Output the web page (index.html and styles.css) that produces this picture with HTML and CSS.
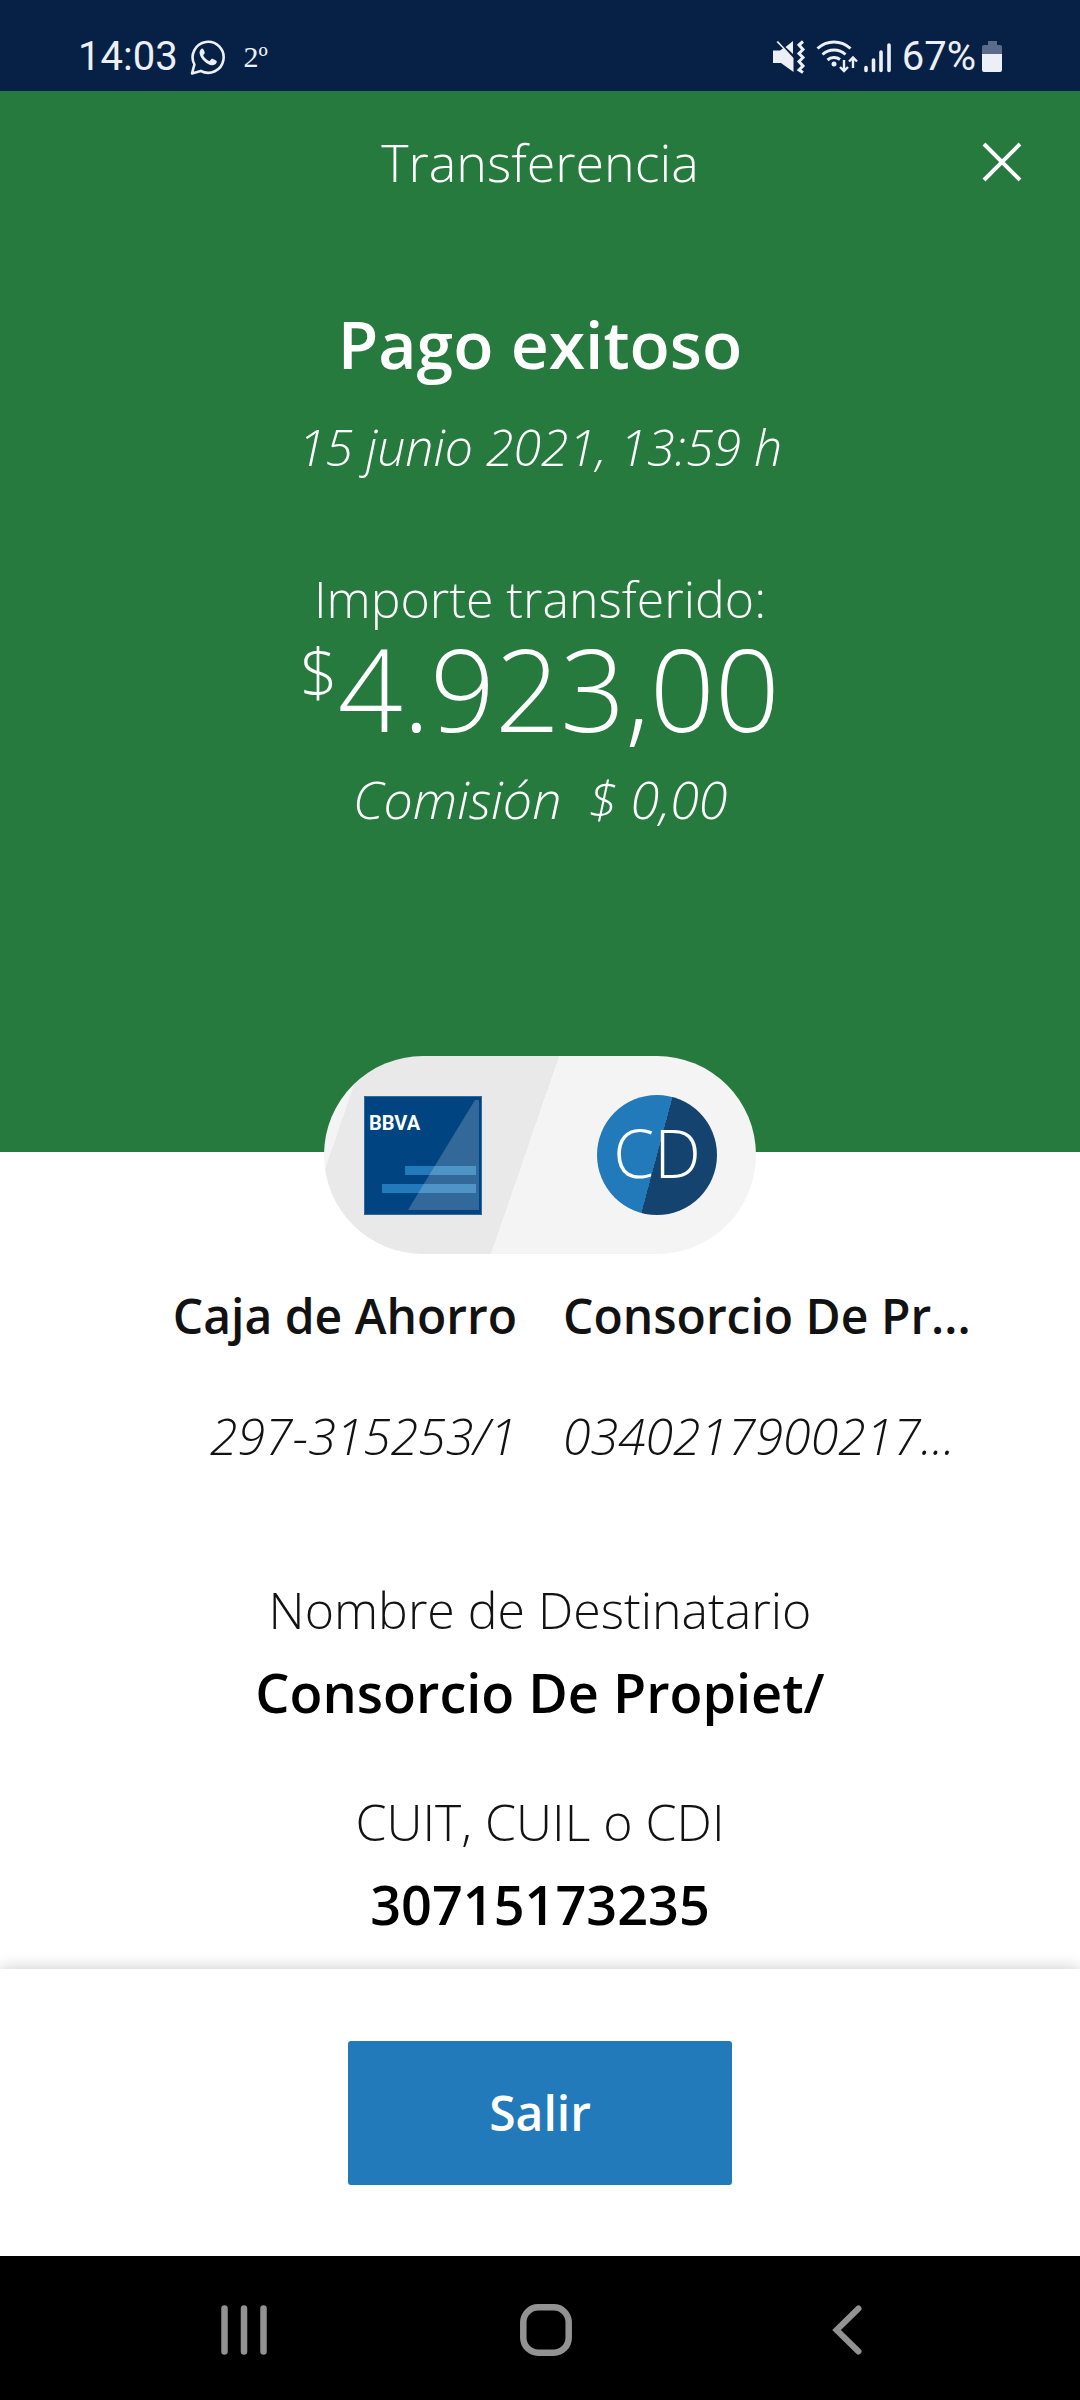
FILE: index.html
```html
<!DOCTYPE html>
<html lang="es">
<head>
<meta charset="utf-8">
<meta name="viewport" content="width=device-width, initial-scale=1">
<title>Transferencia</title>
<link rel="stylesheet" href="styles.css">
</head>
<body>
<div class="screen">
  <div class="status">
    <div class="status-group status-left">
      <span>14:03</span>
      <svg width="36" height="36" viewBox="0 0 36 36" aria-label="WhatsApp">
        <path d="M2 34.500 4.400 25.500A15.500 15.500 0 1 1 10.700 31.900Z" fill="none" stroke="currentColor" stroke-width="2.600" stroke-linejoin="round"/>
        <path d="M12.300 9.500c-.8 0-3 1.800-2.700 4.700.5 4.900 7.200 11.800 12.700 12 2.800.1 4.600-1.900 4.500-3.900 0-.6-4.300-2.800-5-2.600-.8.2-1.800 2.400-2.600 2.300-1.600-.3-5.400-3.700-5.900-5.500-.2-.7 1.500-1.700 1.500-2.700 0-.8-1.500-4.300-2.500-4.300z" fill="currentColor"/>
      </svg>
      <span class="temperature">2º</span>
    </div>
    <div class="status-group status-right">
      <svg width="38" height="34" viewBox="0 0 38 34" aria-label="Vibración">
        <path d="M1 10.500h7l3-2L4.500 2 6 1l15.500 17V32L9 23H1zM13.500 7 21 1v13z" fill="currentColor"/>
        <path d="M31 1.500 27 5l4 4.500-4 4 4 4-4 4 4 4.500-4 4 4 2.500" fill="none" stroke="currentColor" stroke-width="3"/>
      </svg>
      <svg width="42" height="34" viewBox="0 0 42 34" aria-label="Wi-Fi">
        <g fill="none" stroke="currentColor" stroke-width="3">
          <path d="M1.500 8.500A24 24 0 0 1 34.500 8.500M6.500 14.500A17 17 0 0 1 29.500 14.500M11.500 20A10 10 0 0 1 24 19.500"/>
          <path d="M28 20v10M24 27l4 4 4-4M37 28V18M33 21.500l4-4 4 4" stroke-width="2.400"/>
        </g>
        <circle cx="18" cy="24" r="2.500" fill="currentColor"/>
      </svg>
      <svg width="32" height="34" viewBox="0 0 32 34" aria-label="Señal">
        <path d="M2 27.500v3M9.500 20v10.500M17 12v18.500M25 5v25.500" fill="none" stroke="currentColor" stroke-width="3.600" stroke-linecap="round"/>
      </svg>
      <span>67%</span>
      <svg width="20" height="34" viewBox="0 0 20 34" aria-label="Batería">
        <path d="M6 1h9v4h3a2 2 0 0 1 2 2v8H0V7a2 2 0 0 1 2-2h4z" fill="#5b6b8b"/>
        <path d="M0 14h20v16a2 2 0 0 1-2 2H2a2 2 0 0 1-2-2z" fill="currentColor"/>
      </svg>
    </div>
  </div>

  <main class="content">
    <section class="hero">
      <header class="app-bar">
        <span class="app-title">Transferencia</span>
        <button class="close" type="button" aria-label="Cerrar">
          <svg width="40" height="40" viewBox="0 0 40 40"><path d="M2 2 38 38M38 2 2 38" fill="none" stroke="currentColor" stroke-width="4"/></svg>
        </button>
      </header>
      <h1 class="result">Pago exitoso</h1>
      <p class="date">15 junio 2021, 13:59 h</p>
      <p class="amount-label">Importe transferido:</p>
      <p class="amount"><span class="currency">$</span>4.923,00</p>
      <p class="fee">Comisión&nbsp; $ 0,00</p>
    </section>

    <section class="parties">
      <div class="pill">
        <svg width="118" height="119" viewBox="0 0 118 119" aria-label="BBVA">
          <path d="M0 0h118v119H0z" fill="#004481"/>
          <path d="M41 70h71v9H41zM18 88h94v9H18z" fill="#237aba"/>
          <path d="M111 4h4v110H44z" fill="#fff" fill-opacity=".2"/>
          <path d="M.5.500h117v118H.5z" fill="none" stroke="#2f6b9c"/>
          <text class="brand" x="5" y="34">BBVA</text>
        </svg>
        <span class="avatar">CD</span>
      </div>
      <div class="accounts">
        <div class="account account-from">
          <p class="account-name">Caja de Ahorro</p>
          <p class="account-number">297-315253/1</p>
        </div>
        <div class="account">
          <p class="account-name">Consorcio De Pr...</p>
          <p class="account-number">0340217900217...</p>
        </div>
      </div>
    </section>

    <dl class="details">
      <div class="detail">
        <dt>Nombre de Destinatario</dt>
        <dd>Consorcio De Propiet/</dd>
      </div>
      <div class="detail">
        <dt>CUIT, CUIL o CDI</dt>
        <dd>30715173235</dd>
      </div>
    </dl>
  </main>

  <footer class="actions">
    <button class="exit" type="button">Salir</button>
  </footer>

  <nav class="system-nav" aria-label="Sistema">
    <button type="button" aria-label="Recientes">
      <svg width="52" height="52" viewBox="0 0 52 52"><path d="M6.500 4.500v43M26 4.500v43M45.500 4.500v43" fill="none" stroke="currentColor" stroke-width="6.500" stroke-linecap="round"/></svg>
    </button>
    <button type="button" aria-label="Inicio">
      <svg width="52" height="52" viewBox="0 0 52 52"><rect x="3.300" y="3.300" width="45.400" height="45.400" rx="15" fill="none" stroke="currentColor" stroke-width="6.500"/></svg>
    </button>
    <button type="button" aria-label="Atrás">
      <svg width="52" height="52" viewBox="0 0 52 52"><path d="M37.500 4.500 15.500 26l22 21.500" fill="none" stroke="currentColor" stroke-width="6" stroke-linecap="round"/></svg>
    </button>
  </nav>
</div>
</body>
</html>
```
FILE: styles.css
```css
* {
  box-sizing: border-box;
}

body,
h1,
p,
dl,
dd {
  margin: 0;
}

body {
  background: #fff;
  color: #121212;
  font-family: "Open Sans", "Noto Sans", sans-serif;
  font-size: 50px;
  font-weight: 300;
  line-height: 72px;
}

button {
  border: 0;
  padding: 0;
  background: none;
  color: inherit;
  font: inherit;
}

svg {
  display: block;
  flex: none;
}

.screen {
  display: flex;
  flex-direction: column;
  min-height: 100vh;
}

/* Status bar */
.status {
  display: flex;
  justify-content: space-between;
  height: 91px;
  padding: 22px 78px 0;
  background: #072146;
  color: #eceff5;
  font-family: Roboto, sans-serif;
  font-size: 40px;
  font-weight: 400;
}

.status-group {
  display: flex;
  align-items: center;
}

.status-left {
  gap: 12px;
}

.status-right {
  gap: 6px;
}

.temperature {
  padding-left: 6px;
  font-family: "Liberation Serif", serif;
  font-size: 30px;
}

.content {
  flex: 1;
}

/* Result summary */
.hero {
  display: flex;
  flex-direction: column;
  align-items: center;
  min-height: 1061px;
  background: #277a3e;
  color: #fff;
  text-align: center;
}

.app-bar {
  display: grid;
  grid-template-columns: 1fr auto 1fr;
  align-items: center;
  width: 100%;
  height: 142px;
  padding: 0 58px;
  font-size: 52px;
}

.app-title {
  grid-column: 2;
}

.close {
  justify-self: end;
}

.result {
  padding-top: 64px;
  font-size: 66px;
  font-weight: 600;
  line-height: 92px;
}

.date {
  padding-top: 22px;
  font-style: italic;
}

.amount-label {
  padding-top: 80px;
}

.amount {
  display: flex;
  align-items: flex-start;
  font-size: 114px;
  line-height: 106px;
}

.currency {
  font-size: 66px;
  line-height: 72px;
}

.fee {
  padding-top: 22px;
  font-size: 52px;
  font-style: italic;
}

/* Origin and destination */
.pill {
  display: flex;
  align-items: center;
  justify-content: space-between;
  width: 40%;
  min-width: 432px;
  height: 198px;
  margin: -96px auto 0;
  padding: 0 39px 0 40px;
  border-radius: 99px;
  background: linear-gradient(109deg, #f4f4f4 8%, #e9e9e9 8% 47%, #f4f4f4 47%);
  position: relative;
}

.brand {
  fill: #fff;
  font-family: Roboto, "Liberation Sans", sans-serif;
  font-size: 20px;
  font-weight: 700;
}

.avatar {
  width: 120px;
  height: 120px;
  border-radius: 50%;
  background: linear-gradient(105deg, #237aba 50%, #14436f 50%);
  color: #fff;
  font-size: 66px;
  line-height: 114px;
  text-align: center;
}

.accounts {
  display: grid;
  grid-template-columns: minmax(0, 1fr) minmax(0, 1fr);
  gap: 46px;
  padding: 26px 96px 0;
  white-space: nowrap;
}

.account-from {
  text-align: right;
}

.account-name {
  font-size: 48px;
  font-weight: 600;
}

.account-number {
  padding-top: 48px;
  font-style: italic;
}

/* Recipient details */
.details {
  display: grid;
  gap: 58px;
  padding: 102px 0 24px;
  text-align: center;
}

.detail dd {
  padding-top: 10px;
  color: #000;
  font-size: 54px;
  font-weight: 600;
}

/* Bottom action */
.actions {
  display: flex;
  justify-content: center;
  padding: 72px 0 71px;
  background: #fff;
  box-shadow: 0 0 16px rgba(0, 0, 0, .22);
  position: relative;
}

.exit {
  width: 384px;
  height: 144px;
  border-radius: 3px;
  background: #237aba;
  color: #fff;
  font-size: 48px;
  font-weight: 600;
}

.system-nav {
  display: flex;
  align-items: center;
  justify-content: space-between;
  height: 144px;
  padding: 4px 207px 0 218px;
  background: #000;
  color: #929292;
  position: relative;
}
```
